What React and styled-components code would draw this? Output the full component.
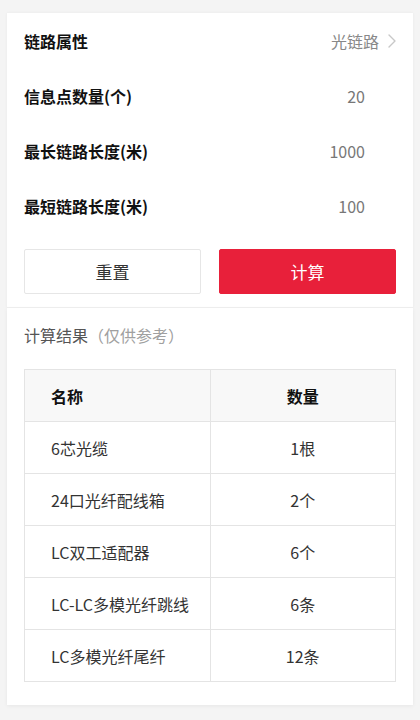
import React from "react";
import styled, { createGlobalStyle } from "styled-components";

const GlobalStyle = createGlobalStyle`
  html, body {
    margin: 0;
    padding: 0;
    background: #f4f4f4;
    font-family: "Microsoft YaHei", "Noto Sans CJK SC", "Noto Sans", sans-serif;
  }
  * { box-sizing: border-box; }
`;

const fields = [
  { label: "链路属性", value: "光链路", select: true },
  { label: "信息点数量(个)", value: "20" },
  { label: "最长链路长度(米)", value: "1000" },
  { label: "最短链路长度(米)", value: "100" },
];

const results = [
  { name: "6芯光缆", count: "1根" },
  { name: "24口光纤配线箱", count: "2个" },
  { name: "LC双工适配器", count: "6个" },
  { name: "LC-LC多模光纤跳线", count: "6条" },
  { name: "LC多模光纤尾纤", count: "12条" },
];

function Chevron() {
  return (
    <svg width="8" height="14" viewBox="0 0 8 14" fill="none">
      <path d="M1 1l6 6-6 6" stroke="#c8c8c8" strokeWidth="1.4" strokeLinecap="round" strokeLinejoin="round" />
    </svg>
  );
}

export default function App() {
  return (
    <>
      <GlobalStyle />
      <Page>
        <FormCard>
          {fields.map((f) => (
            <FieldRow key={f.label}>
              <Label>{f.label}</Label>
              <Value select={f.select}>
                {f.value}
                {f.select && (
                  <Arrow>
                    <Chevron />
                  </Arrow>
                )}
              </Value>
            </FieldRow>
          ))}
          <Actions>
            <Button>重置</Button>
            <Button primary>计算</Button>
          </Actions>
        </FormCard>
        <ResultCard>
          <ResultTitle>
            计算结果<Hint>（仅供参考）</Hint>
          </ResultTitle>
          <Table>
            <thead>
              <tr>
                <HeadCell>名称</HeadCell>
                <HeadCell center>数量</HeadCell>
              </tr>
            </thead>
            <tbody>
              {results.map((r) => (
                <tr key={r.name}>
                  <Cell>{r.name}</Cell>
                  <Cell center>{r.count}</Cell>
                </tr>
              ))}
            </tbody>
          </Table>
        </ResultCard>
      </Page>
    </>
  );
}

const Page = styled.div`
  padding: 13px 7px 14px;
  display: flex;
  flex-direction: column;
`;

const FormCard = styled.div`
  background: #fff;
  padding: 0 17px 13px;
  box-shadow: 0 0 3px rgba(0, 0, 0, 0.05);
  border-bottom: 1px solid #f0f0f0;
`;

const FieldRow = styled.div`
  height: 55px;
  display: flex;
  align-items: center;
  justify-content: space-between;
`;

const Label = styled.div`
  font-size: 16px;
  font-weight: bold;
  color: #111;
`;

const Value = styled.div`
  display: flex;
  align-items: center;
  font-size: 16px;
  color: ${(p) => (p.select ? "#888" : "#777")};
  padding-right: ${(p) => (p.select ? "0" : "31px")};
`;

const Arrow = styled.span`
  display: flex;
  align-items: center;
  margin-left: 9px;
`;

const Actions = styled.div`
  margin-top: 16px;
  display: grid;
  grid-template-columns: 1fr 1fr;
  gap: 18px;
`;

const Button = styled.button`
  height: 45px;
  font-family: inherit;
  font-size: 17px;
  border-radius: 2px;
  cursor: pointer;
  border: 1px solid ${(p) => (p.primary ? "#e8203a" : "#e6e6e6")};
  background: ${(p) => (p.primary ? "#e8203a" : "#fff")};
  color: ${(p) => (p.primary ? "#fff" : "#333")};
`;

const ResultCard = styled.div`
  background: #fff;
  padding: 15px 17px 23px;
  box-shadow: 0 1px 4px rgba(0, 0, 0, 0.06);
`;

const ResultTitle = styled.div`
  font-size: 16px;
  line-height: 24px;
  color: #555;
`;

const Hint = styled.span`
  color: #a0a0a0;
`;

const Table = styled.table`
  margin-top: 22px;
  width: 100%;
  border-collapse: collapse;
  table-layout: fixed;
  border: 1px solid #e4e4e4;
`;

const HeadCell = styled.th`
  height: 52px;
  background: #f8f8f8;
  border: 1px solid #e4e4e4;
  font-size: 16px;
  font-weight: bold;
  color: #111;
  text-align: ${(p) => (p.center ? "center" : "left")};
  padding: ${(p) => (p.center ? "0" : "0 6px 0 26px")};
`;

const Cell = styled.td`
  height: 52px;
  border: 1px solid #e4e4e4;
  font-size: 16px;
  color: #333;
  white-space: nowrap;
  text-align: ${(p) => (p.center ? "center" : "left")};
  padding: ${(p) => (p.center ? "0" : "0 6px 0 26px")};
`;
